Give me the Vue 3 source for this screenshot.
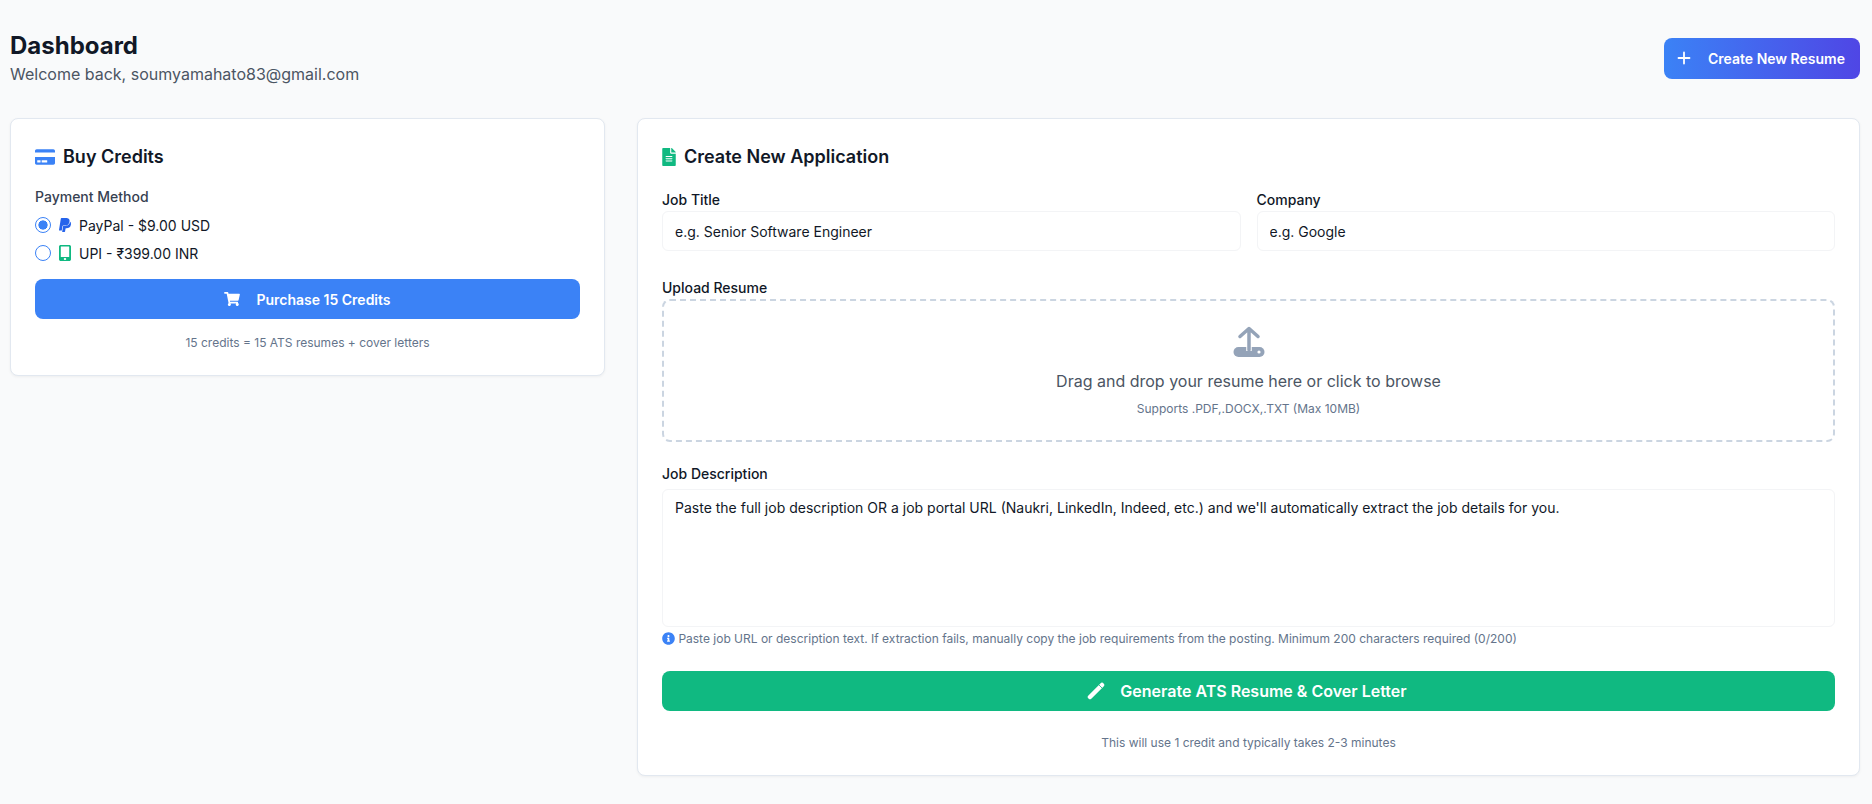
<template>
  <div class="page">
    <header class="top">
      <div>
        <h1>Dashboard</h1>
        <p class="welcome">Welcome back, soumyamahato83@gmail.com</p>
      </div>
      <button class="btn-new">
        <svg class="plus" viewBox="0 0 16 16"><path d="M8 2.500v11M2.500 8h11" /></svg>
        Create New Resume
      </button>
    </header>

    <main class="columns">
      <section class="card">
        <h2>
          <svg class="ico-card" viewBox="0 0 576 512"><path d="M0 432c0 26.500 21.500 48 48 48h480c26.500 0 48-21.500 48-48V256H0v176zm192-68c0-6.600 5.400-12 12-12h136c6.600 0 12 5.400 12 12v40c0 6.600-5.400 12-12 12H204c-6.600 0-12-5.400-12-12v-40zm-128 0c0-6.600 5.400-12 12-12h72c6.600 0 12 5.400 12 12v40c0 6.600-5.400 12-12 12H76c-6.600 0-12-5.400-12-12v-40zM576 80v48H0V80c0-26.500 21.500-48 48-48h480c26.500 0 48 21.500 48 48z" /></svg>
          Buy Credits
        </h2>
        <div class="pay-label">Payment Method</div>
        <label class="pay-row">
          <input type="radio" v-model="method" value="paypal" />
          <svg class="ico-paypal" viewBox="0 0 384 512"><path d="M111.400 295.900c-3.500 19.200-17.400 108.700-21.500 134-.3 1.800-1 2.500-3 2.500H12.300c-7.600 0-13.100-6.600-12.100-13.900L58.800 46.600c1.500-9.600 10.100-16.900 20-16.900 152.300 0 165.100-3.700 204 11.400 60.100 23.300 65.600 79.500 44 140.300-21.500 62.600-72.500 89.500-140.100 90.300-43.400.7-69.500-7-75.300 24.200zM357.100 152c-1.800-1.300-2.500-1.800-3 1.300-2 11.400-5.100 22.500-8.800 33.600-39.900 113.800-150.500 103.900-204.500 103.900-6.100 0-10.100 3.300-10.900 9.400-22.600 140.400-27.100 169.700-27.100 169.700-1 7.100 3.500 12.900 10.600 12.900h63.500c8.600 0 15.700-6.300 17.400-14.900.7-5.400-1.100 6.100 14.400-91.300 4.600-22 14.300-19.700 29.300-19.700 71 0 126.400-28.800 142.900-112.300 6.500-34.800 4.600-71.400-23.800-92.600z" /></svg>
          PayPal - $9.00 USD
        </label>
        <label class="pay-row">
          <input type="radio" v-model="method" value="upi" />
          <svg class="ico-mobile" viewBox="0 0 320 512" preserveAspectRatio="none"><path d="M272 0H48C21.500 0 0 21.500 0 48v416c0 26.500 21.500 48 48 48h224c26.500 0 48-21.500 48-48V48c0-26.500-21.500-48-48-48zM160 480c-17.700 0-32-14.300-32-32s14.300-32 32-32 32 14.300 32 32-14.300 32-32 32zm112-108c0 6.600-5.400 12-12 12H60c-6.600 0-12-5.400-12-12V60c0-6.600 5.400-12 12-12h200c6.600 0 12 5.400 12 12v312z" /></svg>
          UPI - ₹399.00 INR
        </label>
        <button class="btn-buy">
          <svg class="ico-cart" viewBox="0 0 576 512"><path d="M528.120 301.319l47.273-208C578.806 78.301 567.391 64 551.990 64H159.208l-9.166-44.810C147.758 8.021 137.930 0 126.529 0H24C10.745 0 0 10.745 0 24v16c0 13.255 10.745 24 24 24h69.883l70.248 343.435C147.325 417.100 136 435.222 136 456c0 30.928 25.072 56 56 56s56-25.072 56-56c0-15.674-6.447-29.835-16.824-40h209.647C430.447 426.165 424 440.326 424 456c0 30.928 25.072 56 56 56s56-25.072 56-56c0-22.172-12.888-41.332-31.579-50.405l5.517-24.276c3.413-15.018-8.002-29.319-23.403-29.319H218.117l-6.545-32h293.145c11.206 0 20.920-7.754 23.403-18.681z" /></svg>
          Purchase 15 Credits
        </button>
        <p class="small center mt16">15 credits = 15 ATS resumes + cover letters</p>
      </section>

      <section class="card">
        <h2>
          <svg class="ico-file" viewBox="0 0 384 512"><path d="M224 136V0H24C10.700 0 0 10.700 0 24v464c0 13.300 10.700 24 24 24h336c13.300 0 24-10.700 24-24V160H248c-13.200 0-24-10.800-24-24zm64 236c0 6.600-5.400 12-12 12H108c-6.600 0-12-5.400-12-12v-8c0-6.600 5.400-12 12-12h168c6.600 0 12 5.400 12 12v8zm0-64c0 6.600-5.400 12-12 12H108c-6.600 0-12-5.400-12-12v-8c0-6.600 5.400-12 12-12h168c6.600 0 12 5.400 12 12v8zm0-72v8c0 6.600-5.400 12-12 12H108c-6.600 0-12-5.400-12-12v-8c0-6.600 5.400-12 12-12h168c6.600 0 12 5.400 12 12zm96-114.100v6.100H256V0h6.100c6.400 0 12.500 2.500 17 7l97.900 98c4.500 4.500 7 10.600 7 16.900z" /></svg>
          Create New Application
        </h2>

        <div class="two">
          <div>
            <label class="field-label">Job Title</label>
            <input class="text" placeholder="e.g. Senior Software Engineer" />
          </div>
          <div>
            <label class="field-label">Company</label>
            <input class="text" placeholder="e.g. Google" />
          </div>
        </div>

        <label class="field-label upload-label">Upload Resume</label>
        <div class="drop">
          <svg class="ico-upload" viewBox="0 0 32 32">
            <rect class="tray" x="0.500" y="21" width="31" height="10" rx="5" />
            <path class="notch" d="M16 20v5" />
            <path class="arrow" d="M16 24V3M7 10.500 16 2.500l9 8" />
            <circle class="dot" cx="26" cy="26" r="1.600" />
          </svg>
          <p class="drop-text">Drag and drop your resume here or click to browse</p>
          <p class="small drop-sub">Supports .PDF,.DOCX,.TXT (Max 10MB)</p>
        </div>

        <label class="field-label desc-label">Job Description</label>
        <textarea class="area" placeholder="Paste the full job description OR a job portal URL (Naukri, LinkedIn, Indeed, etc.) and we'll automatically extract the job details for you."></textarea>
        <p class="small hint">
          <svg class="ico-info" viewBox="0 0 512 512"><path d="M256 8C119.043 8 8 119.083 8 256c0 136.997 111.043 248 248 248s248-111.003 248-248C504 119.083 392.957 8 256 8zm0 110c23.196 0 42 18.804 42 42s-18.804 42-42 42-42-18.804-42-42 18.804-42 42-42zm56 254c0 6.627-5.373 12-12 12h-88c-6.627 0-12-5.373-12-12v-24c0-6.627 5.373-12 12-12h12v-64h-12c-6.627 0-12-5.373-12-12v-24c0-6.627 5.373-12 12-12h64c6.627 0 12 5.373 12 12v100h12c6.627 0 12 5.373 12 12v24z" /></svg>
          Paste job URL or description text. If extraction fails, manually copy the job requirements from the posting. Minimum 200 characters required ({{ desc.length }}/200)
        </p>

        <button class="btn-gen">
          <svg class="ico-pencil" viewBox="0 0 18 18">
            <path class="pencil-body" d="M3 15 15 3" />
            <path class="pencil-cut" d="M11.300 2.300l4.400 4.400" />
          </svg>
          Generate ATS Resume &amp; Cover Letter
        </button>
        <p class="small center mt24">This will use 1 credit and typically takes 2-3 minutes</p>
      </section>
    </main>
  </div>
</template>

<script setup>
import { ref } from "vue";

const method = ref("paypal");
const desc = ref("");
</script>

<style>
html,
body {
  background: #f9fafb;
}
</style>

<style scoped>
.page {
  padding: 30px 12px 28px 10px;
  font-family: Inter, "Liberation Sans", sans-serif;
  color: #111827;
}
.top {
  display: flex;
  justify-content: space-between;
  align-items: center;
  margin-bottom: 32px;
}
h1 {
  margin: 0;
  font-size: 24px;
  line-height: 32px;
  font-weight: 700;
}
.welcome {
  margin: 0;
  font-size: 16px;
  line-height: 24px;
  color: #4b5563;
}
button {
  border: 0;
  color: #fff;
  font-family: inherit;
  font-weight: 600;
  display: flex;
  align-items: center;
  justify-content: center;
  cursor: pointer;
  border-radius: 8px;
}
.btn-new {
  width: 196px;
  height: 41px;
  padding: 0 3px 0 0;
  font-size: 14px;
  gap: 16px;
  background: linear-gradient(90deg, #3b82f6, #4f46e5);
}
.plus {
  width: 16px;
  height: 16px;
  fill: none;
  stroke: #fff;
  stroke-width: 1.800;
  stroke-linecap: round;
}
.columns {
  display: grid;
  grid-template-columns: 595px 1fr;
  gap: 32px;
  align-items: start;
}
.card {
  box-sizing: border-box;
  background: #fff;
  border: 1px solid #e2e8f0;
  border-radius: 8px;
  padding: 24px;
  box-shadow: 0 1px 3px rgba(0, 0, 0, 0.05);
}
h2 {
  margin: 0 0 16px;
  display: flex;
  align-items: center;
  gap: 8px;
  font-size: 18px;
  line-height: 28px;
  font-weight: 600;
}
.ico-card {
  width: 20px;
  height: 18px;
  fill: #3b82f6;
}
.ico-file {
  width: 14px;
  height: 18px;
  fill: #10b981;
}
.pay-label {
  font-size: 14px;
  line-height: 20px;
  font-weight: 500;
  color: #374151;
  margin-bottom: 8px;
}
.pay-row {
  display: flex;
  align-items: center;
  height: 20px;
  margin-bottom: 8px;
  font-size: 14px;
}
.pay-row input {
  appearance: none;
  width: 16px;
  height: 16px;
  margin: 0 8px 0 0;
  border: 1.500px solid #3b82f6;
  border-radius: 50%;
  background: #fff;
}
.pay-row input:checked {
  background: radial-gradient(circle, #3b82f6 0 4.300px, #fff 4.900px);
}
.ico-paypal {
  width: 12px;
  height: 16px;
  margin-right: 8px;
  fill: #2563eb;
}
.ico-mobile {
  width: 12px;
  height: 16px;
  margin-right: 8px;
  fill: #10b981;
}
.btn-buy {
  width: 100%;
  height: 40px;
  margin-top: 16px;
  font-size: 14px;
  gap: 16px;
  background: #3b82f6;
}
.ico-cart {
  width: 16px;
  height: 14px;
  fill: #fff;
}
.small {
  margin: 0;
  font-size: 12px;
  line-height: 16px;
  color: #64748b;
}
.center {
  text-align: center;
}
.mt16 {
  margin-top: 16px;
}
.mt24 {
  margin-top: 24px;
}
.two {
  display: grid;
  grid-template-columns: 1fr 1fr;
  gap: 16px;
  margin-top: 19px;
}
.field-label {
  display: block;
  font-size: 14px;
  line-height: 20px;
  font-weight: 500;
  margin-bottom: 1px;
}
.text,
.area {
  display: block;
  width: 100%;
  box-sizing: border-box;
  border: 1px solid #f3f4f6;
  border-radius: 6px;
  background: #fff;
  font-family: inherit;
  font-size: 14px;
  color: #111827;
  outline: none;
}
.text {
  height: 40px;
  padding: 0 12px;
}
.text::placeholder,
.area::placeholder {
  color: #111827;
  opacity: 1;
}
.upload-label {
  margin-top: 27px;
  margin-bottom: 1px;
}
.drop {
  box-sizing: border-box;
  height: 143px;
  padding-top: 25px;
  border: 2px dashed #cbd5e1;
  border-radius: 8px;
  text-align: center;
}
.ico-upload {
  display: block;
  width: 32px;
  height: 32px;
  margin: 0 auto 11px;
}
.arrow {
  fill: none;
  stroke: #94a3b8;
  stroke-width: 3.500;
  stroke-linecap: round;
  stroke-linejoin: round;
}
.tray {
  fill: #94a3b8;
}
.notch {
  stroke: #fff;
  stroke-width: 5.500;
}
.dot {
  fill: #fff;
}
.drop-text {
  margin: 0 0 8px;
  font-size: 16px;
  line-height: 24px;
  color: #4b5563;
}
.desc-label {
  margin-top: 22px;
  margin-bottom: 5px;
}
.area {
  height: 138px;
  padding: 8px 12px;
  line-height: 20px;
  resize: none;
}
.hint {
  margin-top: 4px;
}
.ico-info {
  width: 13px;
  height: 13px;
  fill: #3b82f6;
  vertical-align: -2px;
}
.btn-gen {
  width: 100%;
  height: 40px;
  margin-top: 24px;
  padding: 0 3px 0 0;
  font-size: 16px;
  gap: 15px;
  background: #10b981;
}
.ico-pencil {
  width: 18px;
  height: 18px;
  fill: none;
}
.pencil-body {
  stroke: #fff;
  stroke-width: 4.500;
  stroke-linecap: round;
}
.pencil-cut {
  stroke: #10b981;
  stroke-width: 0.800;
}
</style>
